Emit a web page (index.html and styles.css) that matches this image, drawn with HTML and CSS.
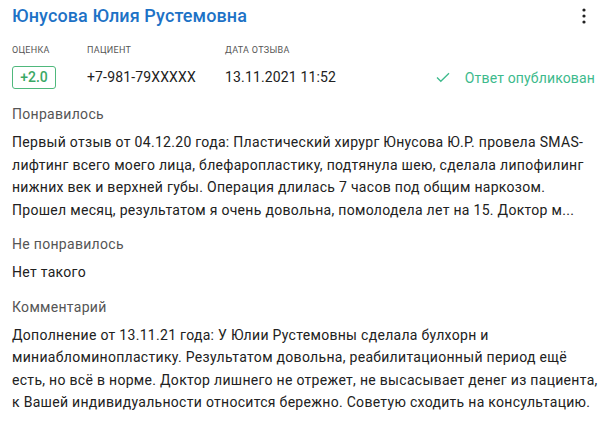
FILE: index.html
```html
<!DOCTYPE html>
<html lang="ru">
<head>
  <meta charset="UTF-8" />
  <title>Отзыв</title>
  <link rel="stylesheet" href="styles.css">
</head>
<body>
  <div class="review-card">
    <div class="review-head">
      <h2>Юнусова Юлия Рустемовна</h2>
      <button class="menu-btn" type="button" aria-label="Меню">
        <svg width="4" height="16" viewBox="0 0 4 16"><circle cx="2" cy="2" r="1.6"/><circle cx="2" cy="8" r="1.6"/><circle cx="2" cy="14" r="1.6"/></svg>
      </button>
    </div>

    <div class="review-meta">
      <div class="meta-col col-score">
        <span class="meta-label">Оценка</span>
        <span class="score-badge">+2.0</span>
      </div>
      <div class="meta-col col-patient">
        <span class="meta-label">Пациент</span>
        <span class="meta-value">+7-981-79XXXXX</span>
      </div>
      <div class="meta-col col-date">
        <span class="meta-label">Дата отзыва</span>
        <span class="meta-value">13.11.2021 11:52</span>
      </div>
      <div class="status">
        <svg width="14" height="11" viewBox="0 0 14 11"><path d="M1 5.5 L4.8 9.3 L13 1.2" fill="none" stroke="#3dba8c" stroke-width="1.3"/></svg>
        <span>Ответ опубликован</span>
      </div>
    </div>

    <div class="review-section">
      <div class="section-title">Понравилось</div>
      <p class="section-text">Первый отзыв от 04.12.20 года: Пластический хирург Юнусова Ю.Р. провела SMAS-<br>лифтинг всего моего лица, блефаропластику, подтянула шею, сделала липофилинг<br>нижних век и верхней губы. Операция длилась 7 часов под общим наркозом.<br>Прошел месяц, результатом я очень довольна, помолодела лет на 15. Доктор м...</p>
    </div>

    <div class="review-section">
      <div class="section-title">Не понравилось</div>
      <p class="section-text">Нет такого</p>
    </div>

    <div class="review-section">
      <div class="section-title">Комментарий</div>
      <p class="section-text">Дополнение от 13.11.21 года: У Юлии Рустемовны сделала булхорн и<br>миниабломинопластику. Результатом довольна, реабилитационный период ещё<br>есть, но всё в норме. Доктор лишнего не отрежет, не высасывает денег из пациента,<br>к Вашей индивидуальности относится бережно. Советую сходить на консультацию.</p>
    </div>
  </div>
</body>
</html>
```

FILE: styles.css
```css
body {
  margin: 0;
  padding: 0;
  background: #fff;
  font-family: Roboto, 'Liberation Sans', sans-serif;
  color: #212121;
}
.review-card {
  padding: 2px 8px 0 12px;
}
.review-head {
  display: flex;
  align-items: center;
  justify-content: space-between;
  height: 27px;
}
.review-head h2 {
  margin: 0;
  font-size: 18px;
  font-weight: 500;
  letter-spacing: 0.1px;
  color: #1d72c6;
}
.menu-btn {
  background: none;
  border: none;
  padding: 0 9px 0 0;
  cursor: pointer;
  display: flex;
}
.menu-btn svg {
  fill: #222;
}
.review-meta {
  display: flex;
  align-items: flex-end;
  margin-top: 15px;
}
.meta-col {
  display: flex;
  flex-direction: column;
  gap: 10px;
}
.col-score { width: 75px; }
.col-patient { width: 138px; }
.col-date { width: 200px; }
.meta-label {
  font-size: 9px;
  letter-spacing: 0.3px;
  text-transform: uppercase;
  color: #555;
  line-height: 12px;
}
.meta-value {
  font-size: 14px;
  letter-spacing: 0.15px;
  line-height: 23px;
  color: #222;
}
.score-badge {
  align-self: flex-start;
  box-sizing: border-box;
  width: 44px;
  height: 23px;
  line-height: 21px;
  border: 1px solid #4fb87c;
  border-radius: 3px;
  color: #3aa865;
  font-size: 14px;
  font-weight: 500;
  text-align: center;
}
.status {
  margin-left: auto;
  display: flex;
  align-items: center;
  gap: 15px;
  height: 23px;
  color: #3dba8c;
  font-size: 14px;
  letter-spacing: 0.15px;
}
.review-section {
  margin-top: 13px;
}
.review-meta + .review-section {
  margin-top: 15px;
}
.section-title {
  font-size: 14px;
  letter-spacing: 0.3px;
  color: #555;
  line-height: 20px;
}
.section-text {
  margin: 7px 0 0;
  font-size: 14px;
  letter-spacing: 0.3px;
  line-height: 22.5px;
  color: #212121;
  white-space: nowrap;
}
```
